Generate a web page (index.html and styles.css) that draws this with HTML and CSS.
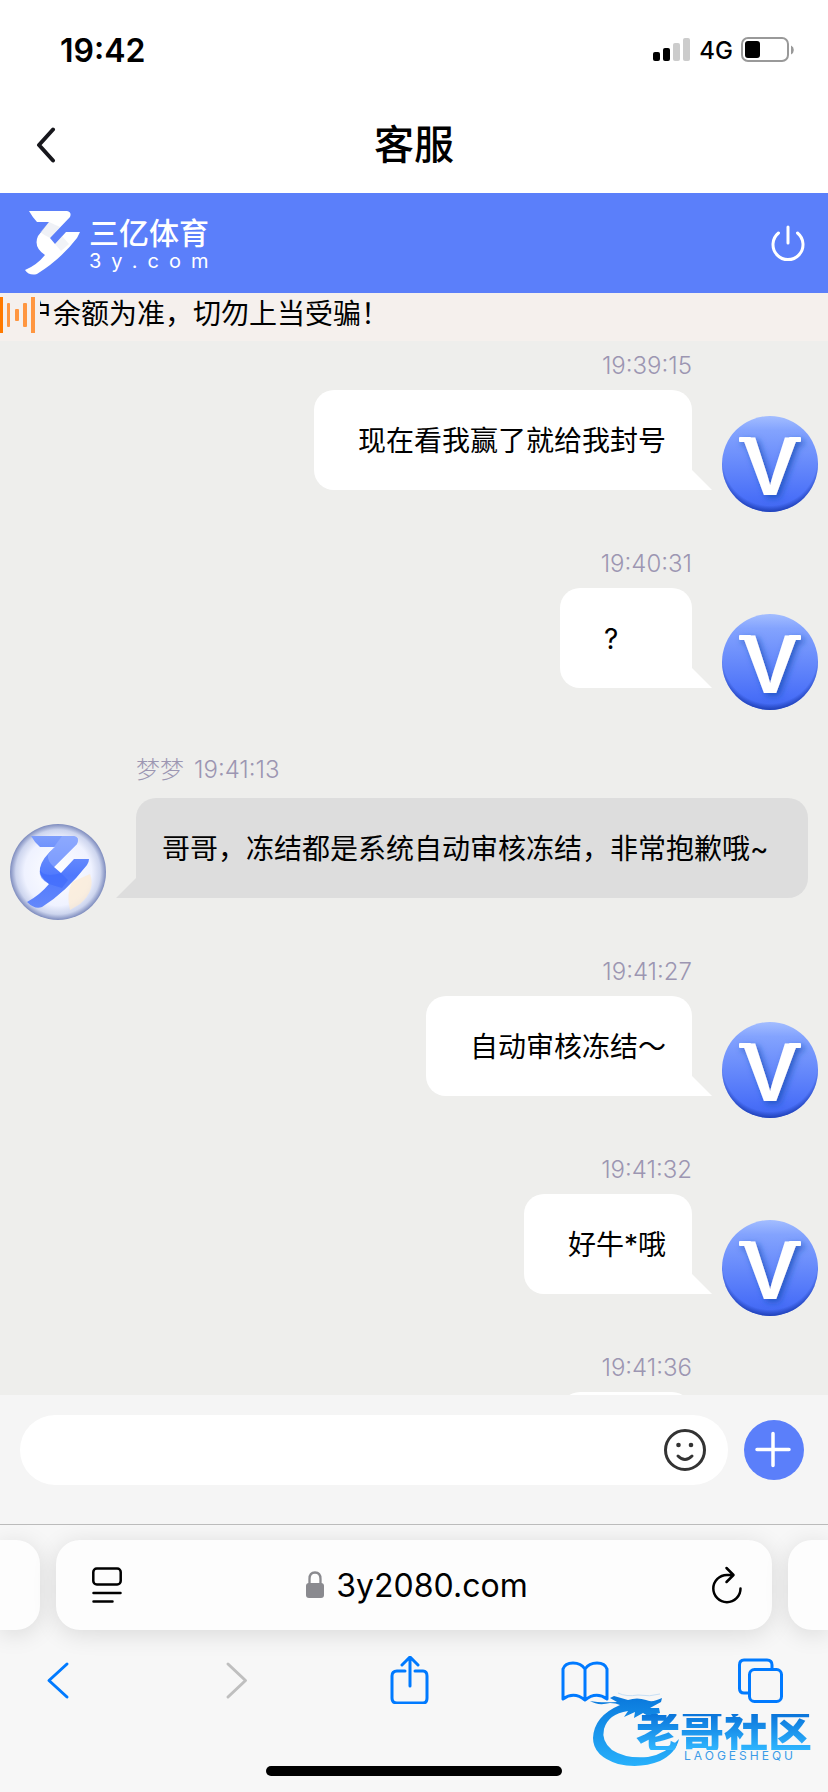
FILE: index.html
```
<!DOCTYPE html>
<html lang="zh-CN">
<head>
    <meta charset="UTF-8">
    <meta name="viewport" content="width=device-width, initial-scale=1.0">
    <title>客服</title>
    <link rel="stylesheet" href="styles.css">
</head>
<body>

<!-- shared avatar drawings -->
<svg class="defs" width="0" height="0" aria-hidden="true">
    <defs>
        <linearGradient id="vipFill" x1="0" y1="0" x2="0" y2="1">
            <stop offset="0" stop-color="#a3bdff"/>
            <stop offset="0.15" stop-color="#83a3fe"/>
            <stop offset="0.85" stop-color="#4a70f8"/>
            <stop offset="1" stop-color="#3f66f0"/>
        </linearGradient>
        <radialGradient id="vipEdge" cx="0.5" cy="0.44" r="0.56">
            <stop offset="0.88" stop-color="#1c3cb0" stop-opacity="0"/>
            <stop offset="1" stop-color="#1c3cb0" stop-opacity="0.9"/>
        </radialGradient>
        <filter id="vipShadow" x="-20%" y="-20%" width="150%" height="150%">
            <feDropShadow dx="3" dy="3" stdDeviation="3" flood-color="#1f50b8" flood-opacity="0.8"/>
        </filter>
        <radialGradient id="agentFill">
            <stop offset="0" stop-color="#ffffff"/>
            <stop offset="0.7" stop-color="#eff2ff"/>
            <stop offset="0.88" stop-color="#cdd5ee"/>
            <stop offset="1" stop-color="#7d8bbd"/>
        </radialGradient>
        <linearGradient id="agentMark" x1="0" y1="0" x2="0" y2="1">
            <stop offset="0" stop-color="#7d9dfc"/>
            <stop offset="0.55" stop-color="#5079fd"/>
            <stop offset="1" stop-color="#6488fb"/>
        </linearGradient>
        <symbol id="avatar-vip" viewBox="0 0 96 96">
            <circle cx="48" cy="48" r="48" fill="url(#vipFill)"/>
            <circle cx="48" cy="48" r="48" fill="url(#vipEdge)"/>
            <g filter="url(#vipShadow)">
                <text class="vip-letter" x="48" y="79" text-anchor="middle">V</text>
                <rect x="17" y="21" width="12" height="5" rx="1" fill="#fff"/>
                <rect x="67" y="21" width="12" height="5" rx="1" fill="#fff"/>
            </g>
        </symbol>
    </defs>
</svg>

<div class="status-bar">
    <span class="clock">19:42</span>
    <div class="status-icons">
        <svg width="38" height="24" viewBox="0 0 38 24">
            <rect x="0" y="14" width="7" height="9" rx="2"/>
            <rect x="10" y="10" width="7" height="13" rx="2"/>
            <rect x="20" y="5" width="7" height="18" rx="2" fill="#ccc"/>
            <rect x="30" y="0" width="7" height="23" rx="2" fill="#ccc"/>
        </svg>
        <span class="network">4G</span>
        <svg width="54" height="26" viewBox="0 0 54 26">
            <rect x="1" y="1" width="46" height="23" rx="6" fill="none" stroke="#999" stroke-width="2"/>
            <rect x="4" y="4" width="15" height="17" rx="3"/>
            <path d="M50 8.500a5 5 0 0 1 0 9z" fill="#999"/>
        </svg>
    </div>
</div>

<div class="title-bar">
    <button class="icon-btn back" type="button" aria-label="返回">
        <svg width="20" height="36" viewBox="0 0 20 36"><path d="M17 2.500L3 18l14 15.500" fill="none" stroke="#17171c" stroke-width="4" stroke-linecap="round" stroke-linejoin="round"/></svg>
    </button>
    <h1>客服</h1>
</div>

<header class="brand-bar">
    <svg width="56" height="64" viewBox="0 0 56 64">
        <path fill="#fff" d="M4 0H42Q47 1 45 6L25 27L30 33L41 21H55L52 27Q36 48 12 63Q4 65 0 59Q12 54 20 44Q8 36 13 25L24 11H12Q8 7 4 0Z"/>
        <path fill="#c9cfe0" opacity=".3" d="M24 11L15 21Q19 24 25 27L35 16Z"/>
        <path fill="#c9cfe0" opacity=".25" d="M30 33L36 40L44 33L37 25Z"/>
    </svg>
    <div class="brand-name">
        <span class="brand-cn">三亿体育</span>
        <span class="brand-en">3y.com</span>
    </div>
    <button class="icon-btn power" type="button" aria-label="退出">
        <svg width="36" height="38" viewBox="0 0 36 38"><path d="M8.500 9a15 15 0 1 0 19 0M18 3v16" fill="none" stroke="#fff" stroke-width="3" stroke-linecap="round"/></svg>
    </button>
</header>

<div class="notice">
    <svg width="36" height="36" viewBox="0 0 36 36">
        <rect width="3" height="36" fill="#ff7a00"/>
        <g fill="#ff9640">
            <rect x="7" y="6" width="3" height="24" rx="1"/>
            <rect x="15" y="12" width="4" height="12" rx="1"/>
            <rect x="23" y="6" width="4" height="24" rx="1"/>
            <rect x="31" width="4" height="36"/>
        </g>
    </svg>
    <div class="notice-view"><p class="notice-text">户余额为准，切勿上当受骗！</p></div>
</div>

<main class="chat">
    <div class="message mine">
        <div class="meta">19:39:15</div>
        <div class="row">
            <p class="bubble">现在看我赢了就给我封号</p>
            <svg class="avatar"><use href="#avatar-vip"/></svg>
        </div>
    </div>
    <div class="message mine">
        <div class="meta">19:40:31</div>
        <div class="row">
            <p class="bubble">?</p>
            <svg class="avatar"><use href="#avatar-vip"/></svg>
        </div>
    </div>
    <div class="message agent">
        <div class="meta"><span>梦梦</span><span>19:41:13</span></div>
        <div class="row">
            <svg class="avatar" viewBox="0 0 96 96">
                <circle cx="48" cy="48" r="48" fill="url(#agentFill)"/>
                <path d="M62 58L80 50Q86 66 70 80L60 86Q56 70 62 58Z" fill="#fdebd2" opacity=".7"/>
                <path d="M21 12H64Q70 13 67 20L44 43L51 49L64 35H79Q79 38 77 41Q56 68 32 83Q25 86 17 78Q30 71 39 60Q28 52 30 44Q32 34 45 23H30Q25 19 21 12Z" fill="url(#agentMark)"/>
                <path d="M52 12H64Q70 13 67 20L44 43Q37 37 38 31Z" fill="#9db5ff" opacity=".5"/>
                <path d="M30 46Q34 54 51 49L58 56L52 64L39 60Q28 54 30 46Z" fill="#3e69fb" opacity=".6"/>
            </svg>
            <p class="bubble">哥哥，冻结都是系统自动审核冻结，非常抱歉哦~</p>
        </div>
    </div>
    <div class="message mine">
        <div class="meta">19:41:27</div>
        <div class="row">
            <p class="bubble">自动审核冻结～</p>
            <svg class="avatar"><use href="#avatar-vip"/></svg>
        </div>
    </div>
    <div class="message mine">
        <div class="meta">19:41:32</div>
        <div class="row">
            <p class="bubble">好牛*哦</p>
            <svg class="avatar"><use href="#avatar-vip"/></svg>
        </div>
    </div>
    <div class="message mine">
        <div class="meta">19:41:36</div>
        <div class="row">
            <p class="bubble"></p>
            <svg class="avatar"><use href="#avatar-vip"/></svg>
        </div>
    </div>
</main>

<form class="composer">
    <div class="field">
        <input type="text" aria-label="消息">
        <button class="icon-btn" type="button" aria-label="表情">
            <svg width="42" height="42" viewBox="0 0 42 42">
                <circle cx="21" cy="21" r="19.500" fill="none" stroke="#333" stroke-width="3"/>
                <circle cx="14.500" cy="16" r="2.300" fill="#333"/>
                <circle cx="27" cy="16" r="2.300" fill="#333"/>
                <path d="M14 27q7 7 14 0" fill="none" stroke="#333" stroke-width="3" stroke-linecap="round"/>
            </svg>
        </button>
    </div>
    <button class="icon-btn plus" type="button" aria-label="更多">
        <svg width="60" height="60" viewBox="0 0 60 60"><path d="M29 13.500v32M13 29.500h32" fill="none" stroke="#fff" stroke-width="3.500" stroke-linecap="round"/></svg>
    </button>
</form>

<footer class="browser-bar">
    <div class="tabs">
        <div class="tab side left"></div>
        <div class="tab address">
            <button class="icon-btn" type="button" aria-label="页面设置">
                <svg width="30" height="36" viewBox="0 0 30 36" fill="none" stroke="#000" stroke-width="2.500" stroke-linecap="round"><rect x="1.300" y="1.500" width="27.400" height="16" rx="3.500"/><path d="M1.500 26h27M1.500 34.500h19"/></svg>
            </button>
            <a href="#" class="site">
                <svg width="18" height="28" viewBox="0 0 18 28"><path d="M3.500 13V8q0-6.500 5.500-6.500T14.500 8v5" fill="none" stroke="#8a8a8f" stroke-width="2.300"/><rect y="12" width="18" height="15" rx="3" fill="#8a8a8f"/></svg>
                3y2080.com
            </a>
            <button class="icon-btn" type="button" aria-label="刷新">
                <svg width="30" height="38" viewBox="0 0 30 38" fill="none" stroke="#000" stroke-width="2.500" stroke-linecap="round" stroke-linejoin="round"><path d="M28.500 22.500A13.600 13.600 0 1 1 15 9h6M14.500 2l7 7-7 7"/></svg>
            </button>
        </div>
        <div class="tab side right"></div>
    </div>
    <nav class="toolbar">
        <button class="icon-btn" type="button" aria-label="后退">
            <svg width="48" height="48" viewBox="0 0 48 48"><path d="M34 8L16 24.500L34 41" /></svg>
        </button>
        <button class="icon-btn disabled" type="button" aria-label="前进" disabled>
            <svg width="48" height="48" viewBox="0 0 48 48"><path d="M19 8l17.500 16.500L19 41"/></svg>
        </button>
        <button class="icon-btn" type="button" aria-label="分享">
            <svg width="48" height="48" viewBox="0 0 48 48"><path d="M20 15H12q-5 0-5 5v22q0 5 5 5h26q4 0 4-5V20q0-5-4-5h-8M25 30V2M17 9l8-8 8 8"/></svg>
        </button>
        <button class="icon-btn" type="button" aria-label="书签">
            <svg width="48" height="48" viewBox="0 0 48 48"><path d="M24 13v31Q13 35 2 43V13Q4 7 12 7T24 13Q28 7 36 7T46 13V43Q35 35 24 44"/></svg>
        </button>
        <button class="icon-btn" type="button" aria-label="标签页">
            <svg width="48" height="48" viewBox="0 0 48 48"><path d="M11 37H7q-4.500 0-4.500-4.500V9Q2.500 4 7 4H30q5 0 5 5v4"/><rect x="12.500" y="13.500" width="32" height="32" rx="5"/></svg>
        </button>
    </nav>
    <div class="home-indicator"></div>
    <div class="watermark">
        <svg width="100" height="80" viewBox="0 0 100 80">
            <defs>
                <linearGradient id="dragon" x1="0" y1="0" x2="0" y2="1">
                    <stop offset="0" stop-color="#0a78dc"/>
                    <stop offset="1" stop-color="#27b0fb"/>
                </linearGradient>
            </defs>
            <path fill="url(#dragon)" d="M0 11Q8 16 20 13Q26 13 30 15Q4 26 3 48Q3 66 28 74Q50 79 70 71Q86 63 89 49Q76 64 58 67Q36 69 22 60Q11 51 14 39Q18 24 38 21L34 27L45 22L44 28L53 23L58 26L70 23L69 18L60 18L71 12L72 8Q62 13 56 10Q47 7 38 10L24 6L20 8L27 12Q10 13 0 11Z"/>
            <path fill="none" stroke="#c9e0f5" d="M28 3Q36 7 48 5Q60 7 70 4"/>
        </svg>
        <div class="watermark-text">
            <span class="watermark-cn">老哥社区</span>
            <span class="watermark-en">LAOGESHEQU</span>
        </div>
    </div>
</footer>

</body>
</html>
```
FILE: styles.css
```
* {
    box-sizing: border-box;
}
body {
    font-family: Inter, "Noto Sans CJK SC", sans-serif;
    margin: 0;
    height: 100vh;
    display: flex;
    flex-direction: column;
    background-color: #fff;
    color: #000;
    overflow: hidden;
}
p, h1 {
    margin: 0;
}
svg {
    display: block;
    flex: none;
}
.defs {
    position: absolute;
}
.icon-btn {
    padding: 0;
    border: 0;
    background: none;
    cursor: pointer;
}

/* status bar */
.status-bar {
    display: flex;
    align-items: center;
    justify-content: space-between;
    height: 100px;
    padding: 0 33px 0 60px;
}
.clock {
    font-size: 32px;
    font-weight: 600;
}
.status-icons {
    display: flex;
    align-items: center;
    gap: 8px;
}
.network {
    font-size: 24px;
    font-weight: 500;
}

.title-bar {
    display: grid;
    grid-template-columns: 1fr auto 1fr;
    align-items: center;
    height: 93px;
    padding: 0 36px 4px;
}
.title-bar h1 {
    font-size: 40px;
    font-weight: 500;
    line-height: 56px;
}
.back {
    justify-self: start;
}

/* brand header */
.brand-bar {
    display: flex;
    align-items: center;
    gap: 8px;
    height: 100px;
    padding: 0 22px 0 25px;
    background-color: #5b7ffa;
    color: #fff;
}
.brand-name {
    display: flex;
    flex-direction: column;
}
.brand-cn {
    font-size: 30px;
    font-weight: 500;
    line-height: 36px;
}
.brand-en {
    font-size: 20px;
    line-height: 20px;
    letter-spacing: 10px;
}
.power {
    margin-left: auto;
}

.notice {
    display: flex;
    gap: 4px;
    height: 48px;
    padding-top: 4px;
    background-color: #f5f0ed;
}
.notice-view {
    flex: 1;
    overflow: hidden;
}
.notice-text {
    margin-left: -15px;
    font-size: 28px;
    line-height: 34px;
    white-space: nowrap;
}

/* chat */
.chat {
    flex: 1;
    min-height: 0;
    overflow: hidden;
    background-color: #eeeeec;
}
.message {
    margin-bottom: 49px;
}
.meta {
    display: flex;
    gap: 10px;
    padding: 10px 0 9px;
    font-size: 24px;
    font-weight: 300;
    line-height: 30px;
    color: #9c96b2;
}
.mine .meta {
    justify-content: flex-end;
    padding-right: 136px;
}
.agent .meta {
    padding: 18px 0 13px 136px;
}
.row {
    display: flex;
    gap: 30px;
    height: 100px;
    padding: 0 10px;
}
.mine .row {
    justify-content: flex-end;
}
.bubble {
    position: relative;
    min-width: 132px;
    height: 100px;
    padding: 0 26px 0 44px;
    border-radius: 20px 20px 0 20px;
    background-color: #fff;
    font-size: 28px;
    line-height: 102px;
    white-space: nowrap;
}
.bubble::after {
    content: "";
    position: absolute;
    right: -20px;
    bottom: 0;
    border-bottom: 20px solid #fff;
    border-right: 20px solid transparent;
}
.agent .bubble {
    padding: 0 39px 0 26px;
    border-radius: 20px 20px 20px 0;
    background-color: #ddd;
}
.agent .bubble::after {
    right: auto;
    left: -20px;
    border-bottom-color: #ddd;
    border-right: 0;
    border-left: 20px solid transparent;
}
.avatar {
    width: 96px;
    height: 96px;
    margin-top: 26px;
}
.vip-letter {
    font-family: "Liberation Sans", sans-serif;
    font-size: 84px;
    font-weight: bold;
    fill: #fff;
}

/* message box */
.composer {
    display: flex;
    align-items: center;
    gap: 16px;
    height: 129px;
    padding: 20px 24px 39px 20px;
    background-color: #f5f5f5;
}
.field {
    flex: 1;
    display: flex;
    align-items: center;
    height: 70px;
    padding: 0 22px 0 30px;
    border-radius: 35px;
    background-color: #fff;
}
.field input {
    flex: 1;
    min-width: 0;
    border: 0;
    outline: 0;
    background: none;
    font-size: 28px;
}
.plus {
    border-radius: 50%;
    background-color: #5b7ffa;
}

/* browser chrome */
.browser-bar {
    position: relative;
    border-top: 1px solid #bbb;
    background-color: #f7f7f7;
}
.tabs {
    display: flex;
    gap: 16px;
    padding: 15px 0 26px;
    overflow: hidden;
}
.tab {
    height: 90px;
    border-radius: 24px;
    background-color: #fdfdfd;
    box-shadow: 0 4px 24px rgba(0, 0, 0, 0.12);
}
.side {
    width: 40px;
}
.left {
    border-radius: 0 24px 24px 0;
}
.right {
    border-radius: 24px 0 0 24px;
}
.address {
    flex: 1;
    display: flex;
    align-items: center;
    justify-content: space-between;
    padding: 0 30px 0 36px;
}
.site {
    display: flex;
    align-items: center;
    gap: 12px;
    color: #000;
    font-size: 32px;
    text-decoration: none;
}
.toolbar {
    display: flex;
    justify-content: space-between;
    padding: 0 43px 0 33px;
}
.toolbar svg {
    fill: none;
    stroke: #007aff;
    stroke-width: 3px;
    stroke-linecap: round;
    stroke-linejoin: round;
}
.toolbar .disabled svg {
    stroke: #bfbfbf;
}
.home-indicator {
    width: 296px;
    height: 10px;
    margin: 62px auto 16px;
    border-radius: 5px;
    background-color: #000;
}
.watermark {
    position: absolute;
    right: 16px;
    bottom: 22px;
    display: flex;
}
.watermark-text {
    display: flex;
    flex-direction: column;
    margin-left: -54px;
    padding-top: 24px;
}
.watermark-cn {
    font-size: 44px;
    font-weight: 900;
    line-height: 36px;
    color: transparent;
    background: linear-gradient(#0a74da, #2fb6ff);
    -webkit-background-clip: text;
    background-clip: text;
}
.watermark-en {
    align-self: flex-end;
    padding-right: 16px;
    font-size: 12px;
    line-height: 12px;
    letter-spacing: 3px;
    color: #3a9be8;
}
```
